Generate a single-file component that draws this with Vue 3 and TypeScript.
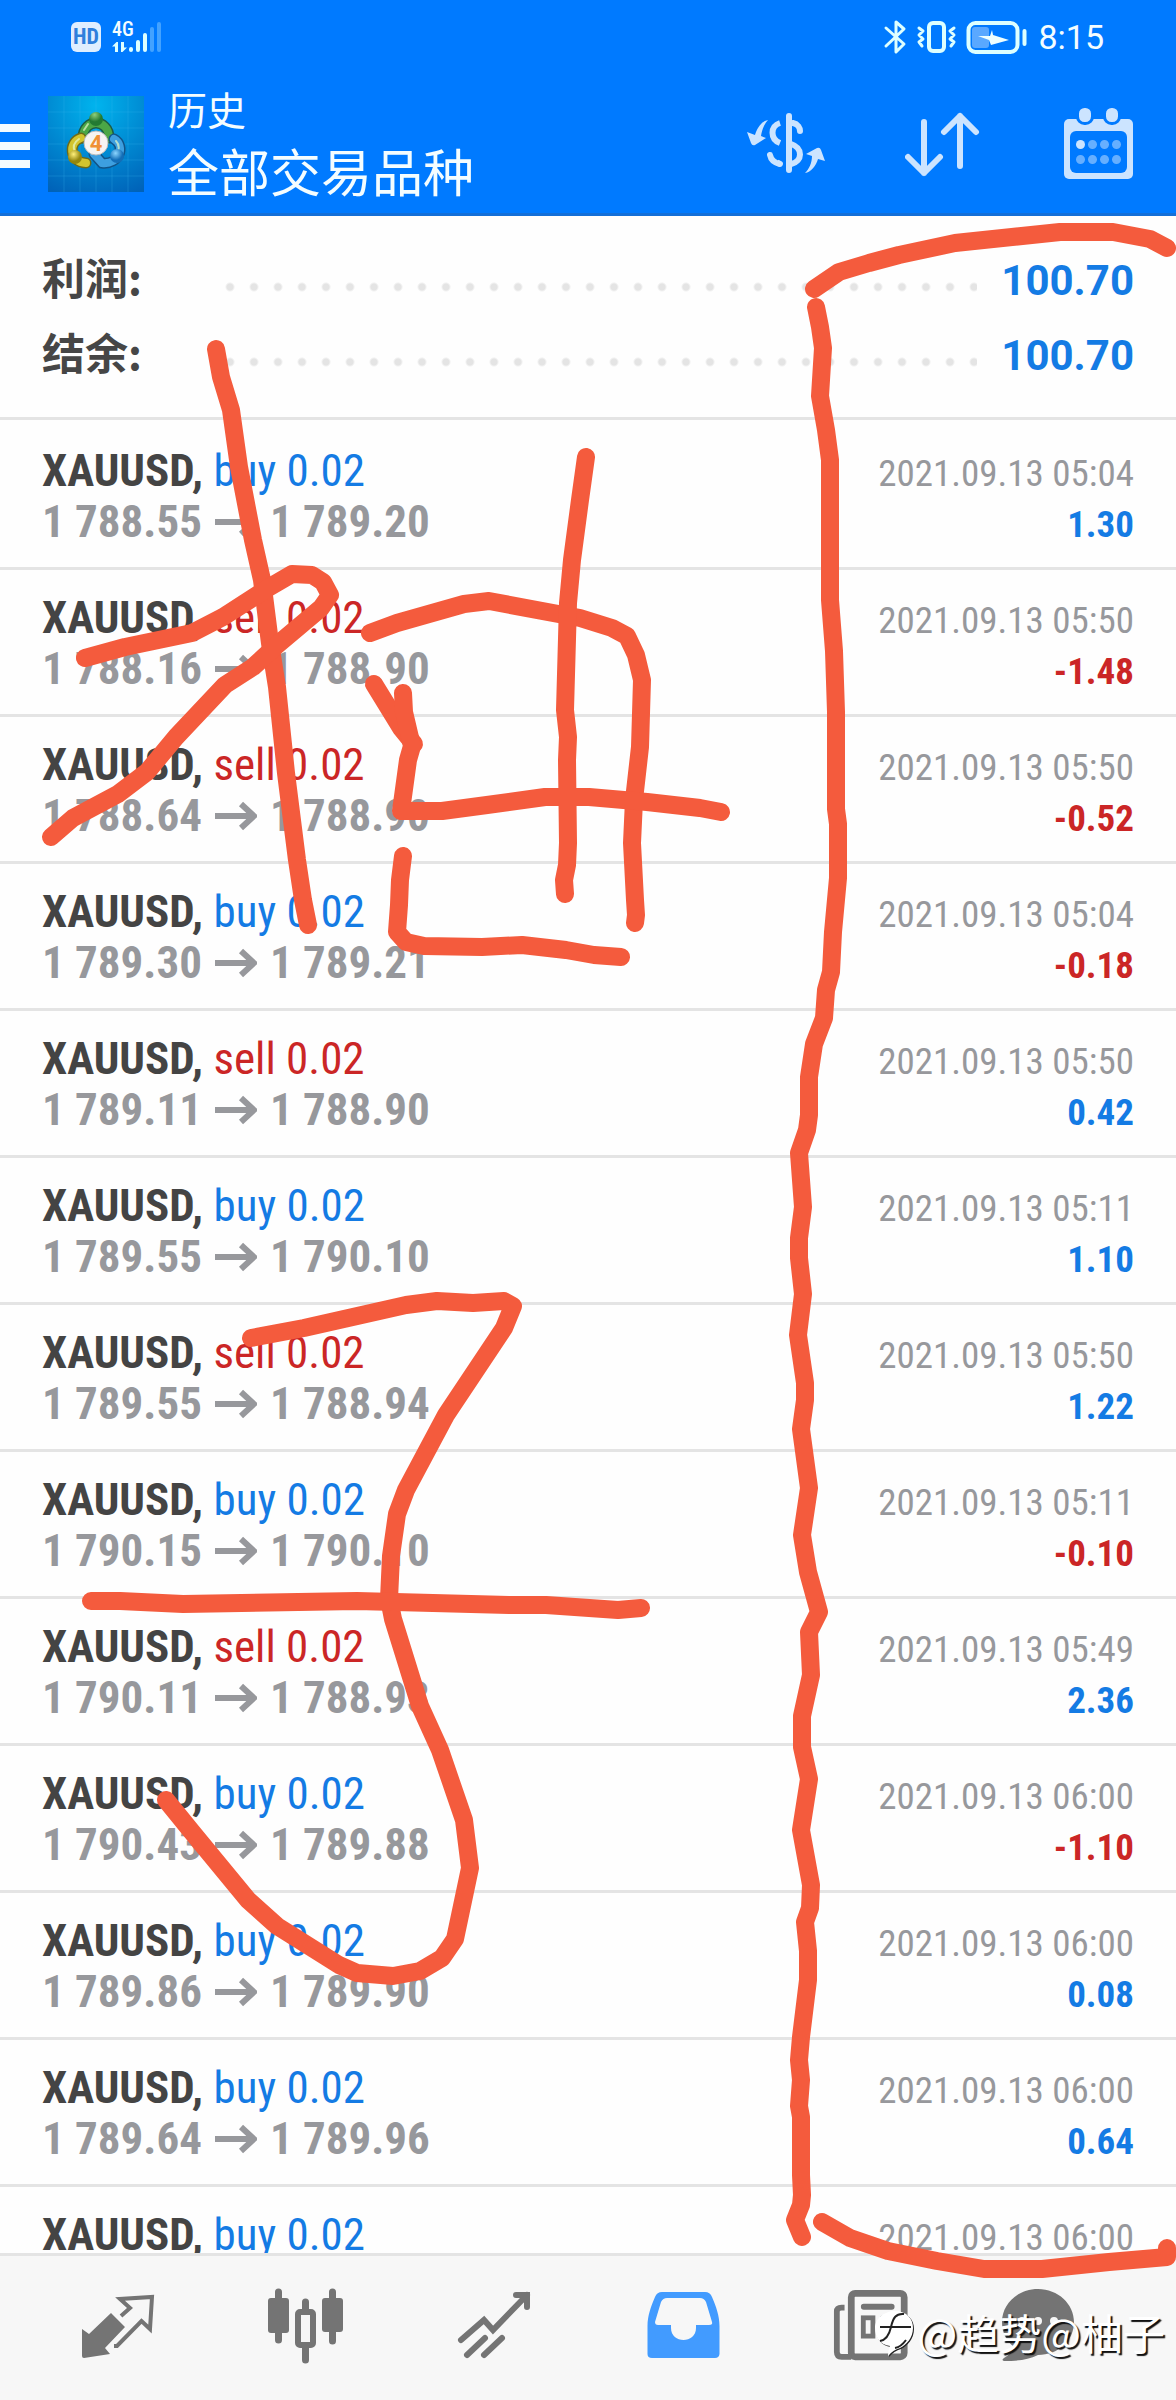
<script setup lang="ts">
interface Deal {
  side: 'buy' | 'sell'
  open: string
  close: string
  time: string
  profit: string
}

const summary = [
  { label: '利润:', value: '100.70' },
  { label: '结余:', value: '100.70' },
]

const deal = (side: Deal['side'], open: string, close: string, time: string, profit: string): Deal => ({
  side,
  open,
  close,
  time: `2021.09.13 ${time}`,
  profit,
})

const deals: Deal[] = [
  deal('buy', '1 788.55', '1 789.20', '05:04', '1.30'),
  deal('sell', '1 788.16', '1 788.90', '05:50', '-1.48'),
  deal('sell', '1 788.64', '1 788.90', '05:50', '-0.52'),
  deal('buy', '1 789.30', '1 789.21', '05:04', '-0.18'),
  deal('sell', '1 789.11', '1 788.90', '05:50', '0.42'),
  deal('buy', '1 789.55', '1 790.10', '05:11', '1.10'),
  deal('sell', '1 789.55', '1 788.94', '05:50', '1.22'),
  deal('buy', '1 790.15', '1 790.10', '05:11', '-0.10'),
  deal('sell', '1 790.11', '1 788.93', '05:49', '2.36'),
  deal('buy', '1 790.43', '1 789.88', '06:00', '-1.10'),
  deal('buy', '1 789.86', '1 789.90', '06:00', '0.08'),
  deal('buy', '1 789.64', '1 789.96', '06:00', '0.64'),
  deal('buy', '1 789.64', '1 789.96', '06:00', '0.64'),
]

// Freehand marker strokes drawn on top of the page
const strokes = [
  '814,289 839,272 869,263 899,255 955,243 1012,237 1060,232 1113,232 1150,239 1167,248',
  '816,307 820,327 823,348 820,396 826,430 830,460 830,600 834,651 836,712 836,809 838,824 838,878 833,932 831,972 826,990 824,1018 814,1044 809,1077 809,1115 807,1130 799,1153 803,1207 799,1238 799,1258 803,1294 798,1335 805,1383 805,1400 801,1429 809,1488 802,1535 808,1572 819,1612 809,1632 811,1675 802,1716 802,1747 809,1779 801,1830 811,1885 810,1908 805,1922 808,1951 808,1980 801,2037 799,2060 801,2080 799,2106 801,2117 801,2175 802,2195 801,2205 795,2220 802,2237',
  '822,2222 850,2238 888,2251 937,2261 984,2269 1042,2269 1109,2262 1167,2257 1167,2248',
  '216,349 221,377 231,410 239,467 253,540 262,580 270,643 277,687 286,773 297,860 303,900 308,925',
  '85,658 125,647 192,633 223,617 268,588 292,574 312,575 323,582 330,595 321,608 277,645 253,667 225,685 176,737 147,772 118,794 73,818 51,837',
  '370,633 397,623 464,604 489,601 580,618 612,628 627,636 636,655 642,680 640,747 634,800 632,843 635,900 636,915 635,923',
  '586,457 580,500 572,560 568,603 565,710 568,737 567,760 568,843 567,865 564,880 565,894',
  '374,684 401,728 414,744',
  '403,693 404,712 412,746 408,760 401,811 442,811 487,805 545,797 589,797 647,802 700,808 721,812',
  '403,856 400,880 399,905 397,932 406,942 424,946 482,947 522,945 566,950 594,955 621,957',
  '251,1338 304,1328 406,1305 437,1301 473,1303 504,1301 513,1306 504,1328 446,1415 406,1490 397,1514 391,1556 389,1599 393,1619 420,1706 440,1750 464,1820 470,1868 455,1939 442,1958 420,1971 393,1976 357,1973 339,1965 277,1926 248,1900 192,1832 166,1800',
  '91,1601 120,1601 183,1604 357,1601 509,1605 546,1605 618,1610 641,1608',
]
</script>

<template>
  <div class="app">
    <header class="top">
      <div class="status">
        <span class="hd">HD</span>
        <span class="network">
          <span class="gen">4G</span>
          <svg class="traffic" viewBox="112 41 15 11" aria-hidden="true">
            <path d="M112 45.500L116.500 41H118V51H115V45.500ZM121 41V51H122.500L127 46.500H124V41Z" fill="#dff" />
          </svg>
        </span>
        <svg class="signal" viewBox="128 20 34 32" aria-hidden="true">
          <g stroke="#dff" stroke-width="4" stroke-linecap="round">
            <path d="M131 48V49M138 41V49M145 34V49" />
            <path d="M152 28V49M159 23V49" opacity=".3" />
          </g>
        </svg>
        <span class="spacer"></span>
        <svg class="phone-state" viewBox="884 18 146 36" role="img" aria-label="蓝牙 振动 充电中">
          <g fill="none" stroke="#dff" stroke-width="3" stroke-linecap="round" stroke-linejoin="round">
            <path d="M887 27L905 43L897 51V21L905 28L887 45" />
            <rect x="930" y="22" width="15" height="28" rx="4" stroke-width="4" />
            <path d="M920 27L924 30L920 34L924 38L920 41L923 45M955 27L951 30L955 34L951 38L955 41L952 45" />
            <rect x="969.500" y="22" width="49" height="29" rx="7" stroke-width="4" />
            <path d="M1025.500 30V43" stroke-width="4" />
          </g>
          <rect x="973" y="26" width="17" height="21" rx="3" fill="#5aa8ff" />
          <path d="M993 29L994 34L1010 39L992 44L990 39L979 35L991 35Z" fill="#eff" />
        </svg>
        <time class="clock">8:15</time>
      </div>
      <div class="toolbar">
        <button class="icon-btn" aria-label="菜单">
          <svg width="30" height="48" viewBox="0 0 30 48"><path d="M0 8H30M0 26H30M0 44H30" stroke="#f4fbff" stroke-width="8" /></svg>
        </button>
        <svg class="logo" viewBox="0 0 96 96" role="img" aria-label="MetaTrader 4">
          <defs>
            <radialGradient id="sky" cx=".5" cy=".1" r="1">
              <stop offset="0" stop-color="#00b4ee" />
              <stop offset="1" stop-color="#0062b8" />
            </radialGradient>
            <radialGradient id="leaf" cx=".4" cy=".2"><stop offset="0" stop-color="#8fce7a" /><stop offset="1" stop-color="#237a32" /></radialGradient>
            <radialGradient id="gold" cx=".4" cy=".3"><stop offset="0" stop-color="#fff07a" /><stop offset="1" stop-color="#93860e" /></radialGradient>
            <radialGradient id="sea" cx=".4" cy=".3"><stop offset="0" stop-color="#8bd5ff" /><stop offset="1" stop-color="#126eb8" /></radialGradient>
          </defs>
          <rect width="96" height="96" fill="url(#sky)" />
          <path d="M0 16H96M0 32H96M0 48H96M0 64H96M0 80H96M16 0V96M32 0V96M48 0V96M64 0V96M80 0V96" stroke="#3ab6f0" stroke-opacity=".25" />
          <g fill="none" stroke-linecap="round">
            <path d="M35 42C35 22 61 22 61 42" stroke="#1d5c45" stroke-width="11" />
            <path d="M35 42C35 22 61 22 61 42" stroke="#4ba646" stroke-width="8" />
            <path d="M33 42C20 46 21 66 38 67" stroke="#6c6a1a" stroke-width="11" />
            <path d="M33 42C20 46 21 66 38 67" stroke="#d2c42e" stroke-width="8" />
            <path d="M66 43C78 50 71 69 54 67L46 58" stroke="#115488" stroke-width="11" />
            <path d="M66 43C78 50 71 69 54 67L46 58" stroke="#3d9fe0" stroke-width="8" />
            <path d="M31 43C25 47 25 52 27 56M68 45C72 49 71 55 69 57M40 28L36 34" stroke="#e6f8c8" stroke-opacity=".7" stroke-width="2" />
          </g>
          <circle cx="48" cy="23" r="7" fill="url(#leaf)" />
          <circle cx="27" cy="61" r="7" fill="url(#gold)" />
          <circle cx="69" cy="60" r="7" fill="url(#sea)" />
          <circle cx="48" cy="47" r="12" fill="#f6f4f2" stroke="#bbb" />
          <text x="48" y="55" text-anchor="middle" class="logo-num">4</text>
        </svg>
        <div class="titles">
          <p class="section">历史</p>
          <h1 class="title">全部交易品种</h1>
        </div>
        <div class="actions">
          <button class="icon-btn" aria-label="货币">
            <svg width="82" height="76" viewBox="745 105 82 76">
              <g fill="none" stroke="#cce4ff" stroke-width="6">
                <path d="M789 115V169M793 122C798 123 800 127 800 130M770 154C771 159 775 162 780 163" stroke-linecap="round" />
                <path d="M780 122C770 125 770 138 780 142M791 143C803 147 803 160 791 163M777 161.500L780 163" />
              </g>
              <path d="M768 119C762 120 757 127 755 134L747 131L751 142Q752 145 755 144L766 137L761 135C762 129 764 123 768 119ZM805 172C811 171 816 165 818 158L825 160L821 149Q820 146 817 147L806 153L812 155C812 162 809 168 805 172Z" fill="#cce4ff" />
            </svg>
          </button>
          <button class="icon-btn" aria-label="排序">
            <svg width="81" height="76" viewBox="905 105 81 76">
              <path d="M924 121V172M908 156L924 172L940 156M960 165V115M944 131L960 115L976 131" fill="none" stroke="#cce4ff" stroke-width="6" stroke-linecap="round" stroke-linejoin="round" />
            </svg>
          </button>
          <button class="icon-btn" aria-label="日期">
            <svg width="69" height="76" viewBox="1064 105 69 76">
              <rect x="1064" y="118" width="69" height="60" rx="5" fill="#cce4ff" />
              <rect x="1070" y="130" width="57" height="42" rx="6" fill="#007aff" />
              <g fill="#cce4ff" stroke="#007aff" stroke-width="3">
                <rect x="1077.500" y="105.500" width="15" height="17" rx="7" />
                <rect x="1104.500" y="105.500" width="15" height="17" rx="7" />
              </g>
              <circle cx="1080.500" cy="143.500" r="4.500" fill="#cce4ff" />
              <path d="M1092.500 143.500h.01M1104.500 143.500h.01M1116.500 143.500h.01M1080.500 158.500h.01M1092.500 158.500h.01M1104.500 158.500h.01M1116.500 158.500h.01" stroke="#66afff" stroke-width="9" stroke-linecap="round" />
            </svg>
          </button>
        </div>
      </div>
    </header>

    <main class="content">
      <dl class="summary">
        <div v-for="item in summary" :key="item.label" class="summary-row">
          <dt>{{ item.label }}</dt>
          <span class="leader"></span>
          <dd>{{ item.value }}</dd>
        </div>
      </dl>
      <ul class="deals">
        <li v-for="(d, i) in deals" :key="i" class="deal">
          <div class="line">
            <p class="symbol">XAUUSD, <span :class="d.side">{{ d.side }} 0.02</span></p>
            <time class="time">{{ d.time }}</time>
          </div>
          <div class="line">
            <p class="prices">
              <span>{{ d.open }}</span>
              <svg class="arrow" viewBox="0 0 42 30" role="img" aria-label="至"><path d="M0 15H38M26 3L39 15L26 27" fill="none" stroke="#97989c" stroke-width="6" /></svg>
              <span>{{ d.close }}</span>
            </p>
            <p class="profit" :class="d.profit.startsWith('-') ? 'sell' : 'buy'">{{ d.profit }}</p>
          </div>
        </li>
      </ul>
    </main>

    <nav class="tabs">
      <button class="icon-btn" aria-label="行情">
        <svg class="tab" viewBox="80 2288 76 76">
          <path d="M82 2329L89 2334L111 2313L125 2327L105 2348L110 2354L84 2358Q82 2358 82 2356Z" fill="#747474" />
          <path d="M121 2316L130 2308L120 2299L152 2297L150 2329L141.500 2321L117 2346H114" fill="none" stroke="#747474" stroke-width="4" />
        </svg>
      </button>
      <button class="icon-btn" aria-label="图表">
        <svg class="tab" viewBox="268 2288 76 76">
          <path d="M278.500 2292V2340M305.500 2302V2360M332.500 2292V2341" stroke="#747474" stroke-width="7" stroke-linecap="round" />
          <rect x="268" y="2298" width="21" height="35" rx="3" fill="#747474" />
          <rect x="322" y="2298" width="21" height="34" rx="3" fill="#747474" />
          <rect x="298" y="2312" width="15" height="33" rx="2" fill="#f6f6f6" stroke="#747474" stroke-width="6" />
        </svg>
      </button>
      <button class="icon-btn" aria-label="交易">
        <svg class="tab" viewBox="455 2288 76 76">
          <g fill="none" stroke="#747474" stroke-width="6">
            <path d="M460 2340L483 2320L492 2330L526 2295M515 2295H526V2307" stroke-linecap="round" />
            <path d="M466 2355L484 2338M483 2355L501 2338" stroke-linecap="round" />
          </g>
        </svg>
      </button>
      <button class="icon-btn" aria-label="历史">
        <svg class="tab" viewBox="644 2288 76 76">
          <path fill-rule="evenodd" fill="#429bff" d="M661 2292H704Q709 2292 711 2297C715 2306 718.500 2316 718.500 2326V2354Q718 2358 714 2358H651Q646.500 2358 646.500 2354V2326C646.500 2316 650 2306 654 2297Q656 2292 661 2292ZM666 2298Q662 2298 660 2302L654 2322Q654 2325 657 2325H670V2328C670 2344 695 2344 695 2328V2325H708Q712 2325 711 2322L705 2302Q703 2298 699 2298Z" />
        </svg>
      </button>
      <button class="icon-btn" aria-label="新闻">
        <svg class="tab" viewBox="833 2288 79 76">
          <g fill="none" stroke="#747474" stroke-width="6">
            <rect x="852" y="2292" width="55" height="66" rx="4" stroke-width="7" />
            <path d="M845 2307H842Q837 2307 837 2311V2353Q837 2358 842 2358H852" />
            <path d="M865 2306H894M885 2318H895M885 2327H895" stroke-linecap="round" />
            <rect x="864.500" y="2317.500" width="10" height="19" stroke-width="5" />
          </g>
        </svg>
      </button>
      <button class="icon-btn" aria-label="消息">
        <svg class="tab" viewBox="1000 2288 76 76">
          <path d="M1038 2289C1058 2289 1074 2304 1074 2322C1074 2341 1058 2355 1038 2355C1028 2360 1018 2361 1004 2361Q1001 2360 1004 2358Q1010 2355 1014 2347C1006 2341 1002 2332 1002 2322C1002 2304 1018 2289 1038 2289Z" fill="#747474" />
          <path d="M1022 2321h.01M1038 2321h.01M1054 2321h.01" stroke="#f6f6f6" stroke-width="8" stroke-linecap="round" />
        </svg>
      </button>
    </nav>

    <div class="watermark">
      <svg width="40" height="48" viewBox="874 2313 40 48" aria-hidden="true">
        <path d="M895 2316C907 2316 913 2324 913 2333C913 2343 906 2350 900 2353Q893 2355 888 2361Q888 2355 890 2351C880 2350 875 2342 875 2333C875 2324 884 2316 895 2316Z" fill="#fff" />
        <path d="M904 2319C896 2318 893 2323 891 2332C889 2341 886 2345 880 2346M880 2332H911M906 2345Q901 2352 895 2353" fill="none" stroke="#222" stroke-width="2" />
      </svg>
      <span>@趋势@柚子</span>
    </div>

    <svg class="marker" viewBox="0 0 1176 2400" aria-hidden="true">
      <polyline v-for="(s, i) in strokes" :key="i" :points="s" />
    </svg>
  </div>
</template>

<style>
body {
  margin: 0;
}
</style>

<style scoped>
.app {
  position: relative;
  display: flex;
  flex-direction: column;
  height: 100vh;
  overflow: hidden;
  background: #fefefe;
  font-family: Roboto, "Noto Sans CJK SC", sans-serif;
}
p, h1, dl, dd, ul {
  margin: 0;
  padding: 0;
}
.icon-btn {
  display: flex;
  align-items: center;
  justify-content: center;
  padding: 0;
  border: 0;
  background: none;
}
.top {
  background: #007aff;
  border-bottom: 3px solid #146fd8;
  color: #f4fdff;
}
.status {
  display: flex;
  align-items: center;
  height: 74px;
  padding: 0 72px 0 71px;
}
.hd {
  width: 30px;
  border-radius: 6px;
  background: #dfeeff;
  color: #2f7fdc;
  font: 700 22px/30px "Roboto Condensed", Roboto, sans-serif;
  text-align: center;
}
.network {
  display: flex;
  flex-direction: column;
  gap: 4px;
  width: 16px;
  margin-left: 11px;
}
.gen {
  font: 500 20px/17px "Roboto Condensed", Roboto, sans-serif;
}
.traffic {
  width: 15px;
  height: 11px;
}
.signal {
  width: 34px;
  height: 32px;
}
.spacer {
  flex: 1;
}
.phone-state {
  width: 146px;
  height: 36px;
}
.clock {
  margin-left: 9px;
  font-size: 34px;
  line-height: 40px;
}
.toolbar {
  display: flex;
  align-items: center;
  height: 139px;
  padding-right: 43px;
}
.logo {
  width: 96px;
  height: 96px;
  margin-left: 18px;
}
.logo-num {
  font: 700 22px Roboto, sans-serif;
  fill: #f09035;
}
.titles {
  margin-left: 24px;
  padding-top: 4px;
}
.section {
  font-size: 39px;
  line-height: 58px;
}
.title {
  font-size: 51px;
  font-weight: 400;
  line-height: 68px;
}
.actions {
  display: flex;
  gap: 78px;
  margin-left: auto;
}
.content {
  flex: 1;
  min-height: 0;
  overflow: hidden;
}
.summary {
  padding: 23px 42px 28px;
  border-bottom: 3px solid #e4e4e4;
  font-size: 42px;
  font-weight: 700;
  line-height: 75px;
}
.summary-row {
  display: flex;
  align-items: baseline;
  height: 75px;
}
.summary dt {
  width: 176px;
  color: #464646;
  font-family: "Noto Sans CJK SC", sans-serif;
  font-size: 43px;
}
.summary dd {
  margin-left: 24px;
  color: #147be4;
}
.leader {
  flex: 1;
  align-self: center;
  height: 10px;
  margin-top: 20px;
  background: radial-gradient(circle at 12px 5px, #e4e4e4 3px, transparent 5px) 0 0 / 24px 10px repeat-x;
}
.deals {
  padding-top: 3px;
  list-style: none;
  font-family: "Roboto Condensed", "Liberation Sans Narrow", Roboto, sans-serif;
}
.deal {
  padding: 22px 42px 20px;
  border-bottom: 3px solid #e4e4e4;
}
.line {
  display: flex;
  align-items: baseline;
  justify-content: space-between;
  height: 51px;
  line-height: 51px;
}
.symbol {
  color: #444;
  font-size: 45px;
  font-weight: 700;
}
.symbol span {
  font-weight: 400;
}
.prices {
  display: flex;
  align-items: baseline;
  gap: 13px;
  color: #97989c;
  font-size: 45px;
  font-weight: 700;
}
.arrow {
  width: 42px;
  height: 30px;
}
.time {
  color: #97989c;
  font-size: 37px;
}
.profit {
  font-size: 37px;
  font-weight: 700;
}
.buy {
  color: #147be4;
}
.sell {
  color: #cb2626;
}
.tabs {
  display: grid;
  grid-template-columns: repeat(5, 188fr) 146fr;
  height: 140px;
  padding: 0 65px 4px 24px;
  border-top: 3px solid #e4e4e4;
  background: #f7f7f7;
}
.tab {
  width: 76px;
  height: 76px;
}
.watermark {
  position: absolute;
  right: 11px;
  bottom: 40px;
  display: flex;
  align-items: center;
  gap: 4px;
  color: #fff;
  font: 400 42px/56px "Noto Sans CJK SC", sans-serif;
  text-shadow: 2px 2px 1px #111;
}
.watermark svg {
  filter: drop-shadow(1px 1px 0 #222);
}
.marker {
  position: absolute;
  top: 0;
  left: 0;
  width: 100%;
  pointer-events: none;
}
.marker polyline {
  fill: none;
  stroke: #f45b3d;
  stroke-width: 18;
  stroke-linecap: round;
  stroke-linejoin: round;
}
</style>
